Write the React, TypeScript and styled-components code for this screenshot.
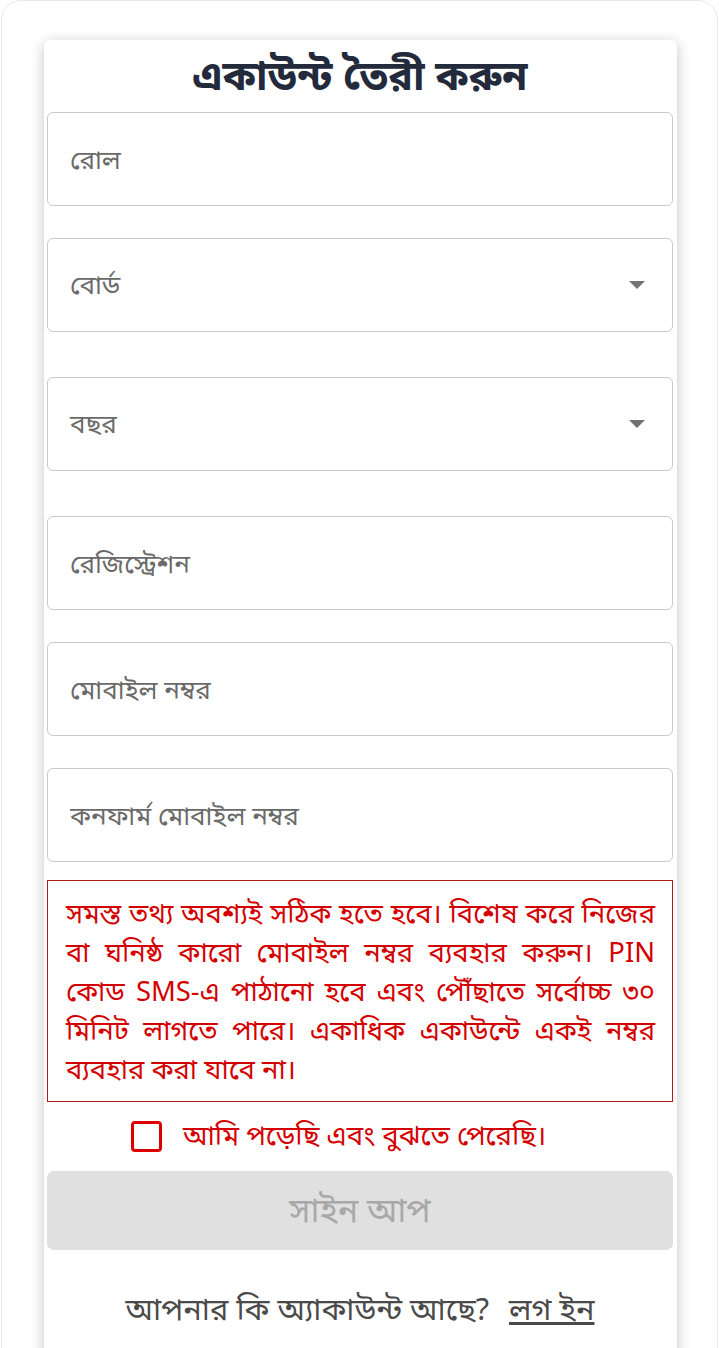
import React, { useState } from "react";
import styled, { createGlobalStyle } from "styled-components";

const GlobalStyle = createGlobalStyle`
  html, body {
    margin: 0;
    padding: 0;
    background: #ffffff;
  }
  body {
    font-family: "Noto Sans", "Noto Sans Bengali", "Lohit Bengali", "DejaVu Sans", sans-serif;
  }
  * {
    box-sizing: border-box;
  }
`;

const Frame = styled.div`
  margin: 0 1px;
  min-height: 1360px;
  border: 1px solid #e6e8ea;
  border-radius: 20px;
  background: #ffffff;
  padding: 39px 41px 0 42px;
  overflow: hidden;
`;

const Card = styled.div`
  width: 633px;
  min-height: 1330px;
  background: #ffffff;
  border-radius: 6px;
  box-shadow: 0 3px 14px rgba(0, 0, 0, 0.24);
  padding: 0 4px 0 3px;
`;

const Title = styled.h1`
  margin: 0;
  height: 72px;
  display: flex;
  align-items: center;
  justify-content: center;
  font-size: 41px;
  font-weight: 700;
  color: #222a3b;
`;

const FieldBox = styled.div<{ $gap: number }>`
  height: 94px;
  margin-bottom: ${(p) => p.$gap}px;
  border: 1px solid #c9c9c9;
  border-radius: 6px;
  display: flex;
  align-items: center;
  padding: 0 24px 0 22px;
`;

const Input = styled.input`
  border: none;
  outline: none;
  width: 100%;
  padding: 0;
  font-family: inherit;
  font-size: 26px;
  color: #333;
  background: transparent;
  &::placeholder {
    color: #6a6a6a;
  }
`;

const SelectLabel = styled.span`
  flex: 1;
  font-size: 26px;
  color: #6a6a6a;
`;

const Caret = styled.span`
  width: 0;
  height: 0;
  margin-right: 3px;
  border-left: 8px solid transparent;
  border-right: 8px solid transparent;
  border-top: 8px solid #727272;
`;

const Notice = styled.p`
  margin: 0;
  border: 1px solid #b31b1b;
  padding: 12px 17px 13px 18px;
  color: #d40000;
  font-size: 27.4px;
  line-height: 39px;
  text-align: justify;
`;

const AgreeRow = styled.label`
  display: flex;
  align-items: center;
  gap: 21px;
  padding-left: 84px;
  height: 48px;
  margin: 10px 0 11px;
  color: #d40000;
  font-size: 27.5px;
  cursor: pointer;
`;

const Box = styled.span<{ $checked: boolean }>`
  flex: none;
  width: 31px;
  height: 31px;
  border: 3px solid #dc0000;
  border-radius: 4px;
  background: ${(p) => (p.$checked ? "#dc0000" : "#fff")};
`;

const SubmitButton = styled.button`
  display: block;
  width: 100%;
  height: 79px;
  border: none;
  border-radius: 7px;
  background: #e0e0e0;
  color: #a8a8a8;
  font-family: inherit;
  font-size: 34px;
`;

const Footer = styled.div`
  text-align: center;
  margin-top: 38px;
  line-height: 40px;
  font-size: 30.8px;
  color: #4a4a4a;
`;

const LoginLink = styled.a`
  color: #4a4a4a;
  text-decoration: underline;
  margin-left: 12px;
`;

const fields = [
  { kind: "input", label: "রোল", gap: 32 },
  { kind: "select", label: "বোর্ড", gap: 45 },
  { kind: "select", label: "বছর", gap: 45 },
  { kind: "input", label: "রেজিস্ট্রেশন", gap: 32 },
  { kind: "input", label: "মোবাইল নম্বর", gap: 32 },
  { kind: "input", label: "কনফার্ম মোবাইল নম্বর", gap: 18 },
];

function App() {
  const [agreed, setAgreed] = useState(false);

  return (
    <>
      <GlobalStyle />
      <Frame>
        <Card>
          <Title>একাউন্ট তৈরী করুন</Title>
          {fields.map((f) => (
            <FieldBox key={f.label} $gap={f.gap}>
              {f.kind === "input" ? (
                <Input placeholder={f.label} />
              ) : (
                <>
                  <SelectLabel>{f.label}</SelectLabel>
                  <Caret />
                </>
              )}
            </FieldBox>
          ))}
          <Notice>
            সমস্ত তথ্য অবশ্যই সঠিক হতে হবে। বিশেষ করে নিজের বা ঘনিষ্ঠ কারো মোবাইল নম্বর ব্যবহার
            করুন। PIN কোড SMS-এ পাঠানো হবে এবং পৌঁছাতে সর্বোচ্চ ৩০ মিনিট লাগতে পারে। একাধিক
            একাউন্টে একই নম্বর ব্যবহার করা যাবে না।
          </Notice>
          <AgreeRow onClick={() => setAgreed(!agreed)}>
            <Box $checked={agreed} />
            আমি পড়েছি এবং বুঝতে পেরেছি।
          </AgreeRow>
          <SubmitButton disabled={!agreed}>সাইন আপ</SubmitButton>
          <Footer>
            আপনার কি অ্যাকাউন্ট আছে? <LoginLink href="#">লগ ইন</LoginLink>
          </Footer>
        </Card>
      </Frame>
    </>
  );
}

export default App;
